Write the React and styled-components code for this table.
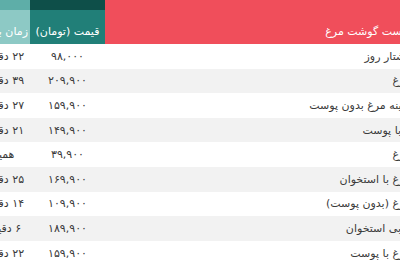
import React from "react";
import styled, { createGlobalStyle } from "styled-components";

const GlobalStyle = createGlobalStyle`
  html, body {
    margin: 0;
    padding: 0;
    background: #fff;
    overflow: hidden;
  }
  body {
    font-family: "DejaVu Sans", "Noto Sans", sans-serif;
  }
`;

const COLORS = {
  red: "#f04e5b",
  teal: "#217f78",
  tealDark: "#0e4f49",
  tealLight: "#8dc9c5",
  tealLightDark: "#5eaea8",
  stripe: "#f2f2f2",
  text: "#3a3a3a",
};

const rows = [
  { name: "کشتار روز", price: "۹۸,۰۰۰", time: "۲۲ دقیقه پیش" },
  { name: "مرغ", price: "۲۰۹,۹۰۰", time: "۳۹ دقیقه پیش" },
  { name: "سینه مرغ بدون پوست", price: "۱۵۹,۹۰۰", time: "۲۷ دقیقه پیش" },
  { name: "پا با پوست", price: "۱۴۹,۹۰۰", time: "۲۱ دقیقه پیش" },
  { name: "مرغ", price: "۳۹,۹۰۰", time: "همین الان" },
  { name: "مرغ با استخوان", price: "۱۶۹,۹۰۰", time: "۲۵ دقیقه پیش" },
  { name: "مرغ (بدون پوست)", price: "۱۰۹,۹۰۰", time: "۱۴ دقیقه پیش" },
  { name: "پا بی استخوان", price: "۱۸۹,۹۰۰", time: "۶ دقیقه پیش" },
  { name: "مرغ با پوست", price: "۱۵۹,۹۰۰", time: "۲۲ دقیقه پیش" },
];

export default function App() {
  return (
    <>
      <GlobalStyle />
      <Viewport>
        <Table dir="rtl">
          <colgroup>
            <col style={{ width: 316 }} />
            <col style={{ width: 75 }} />
            <col style={{ width: 76 }} />
          </colgroup>
          <thead>
            <tr>
              <HeadCell $tone="red" $align="right">لیست گوشت مرغ</HeadCell>
              <HeadCell $tone="teal">قیمت (تومان)</HeadCell>
              <HeadCell $tone="light">زمان بروزرسانی</HeadCell>
            </tr>
          </thead>
          <tbody>
            {rows.map((row, index) => (
              <Row key={index} $striped={index % 2 === 1}>
                <NameCell>{row.name}</NameCell>
                <Cell>{row.price}</Cell>
                <Cell>{row.time}</Cell>
              </Row>
            ))}
          </tbody>
        </Table>
      </Viewport>
    </>
  );
}

const Viewport = styled.div`
  width: 400px;
  height: 266px;
  overflow: hidden;
`;

const Table = styled.table`
  margin-left: -46px;
  width: 467px;
  table-layout: fixed;
  border-collapse: separate;
  border-spacing: 0;
  color: ${COLORS.text};
`;

const tones = {
  red: [COLORS.red, COLORS.red],
  teal: [COLORS.teal, COLORS.tealDark],
  light: [COLORS.tealLight, COLORS.tealLightDark],
};

const HeadCell = styled.th`
  height: 23px;
  padding: 10px 2px 1px;
  border-top: 10px solid ${(p) => tones[p.$tone][1]};
  background: ${(p) => tones[p.$tone][0]};
  color: #fff;
  font-size: 11px;
  font-weight: normal;
  text-align: ${(p) => (p.$align === "right" ? "right" : "center")};
  white-space: nowrap;
  overflow: hidden;

  &:first-child {
    padding-right: 12px;
  }
`;

const Row = styled.tr`
  background: ${(p) => (p.$striped ? COLORS.stripe : "#fff")};
`;

const Cell = styled.td`
  height: 24.6px;
  padding: 0 2px;
  font-size: 11px;
  text-align: center;
  white-space: nowrap;
  overflow: hidden;
`;

const NameCell = styled(Cell)`
  padding-right: 10px;
  text-align: right;
`;
